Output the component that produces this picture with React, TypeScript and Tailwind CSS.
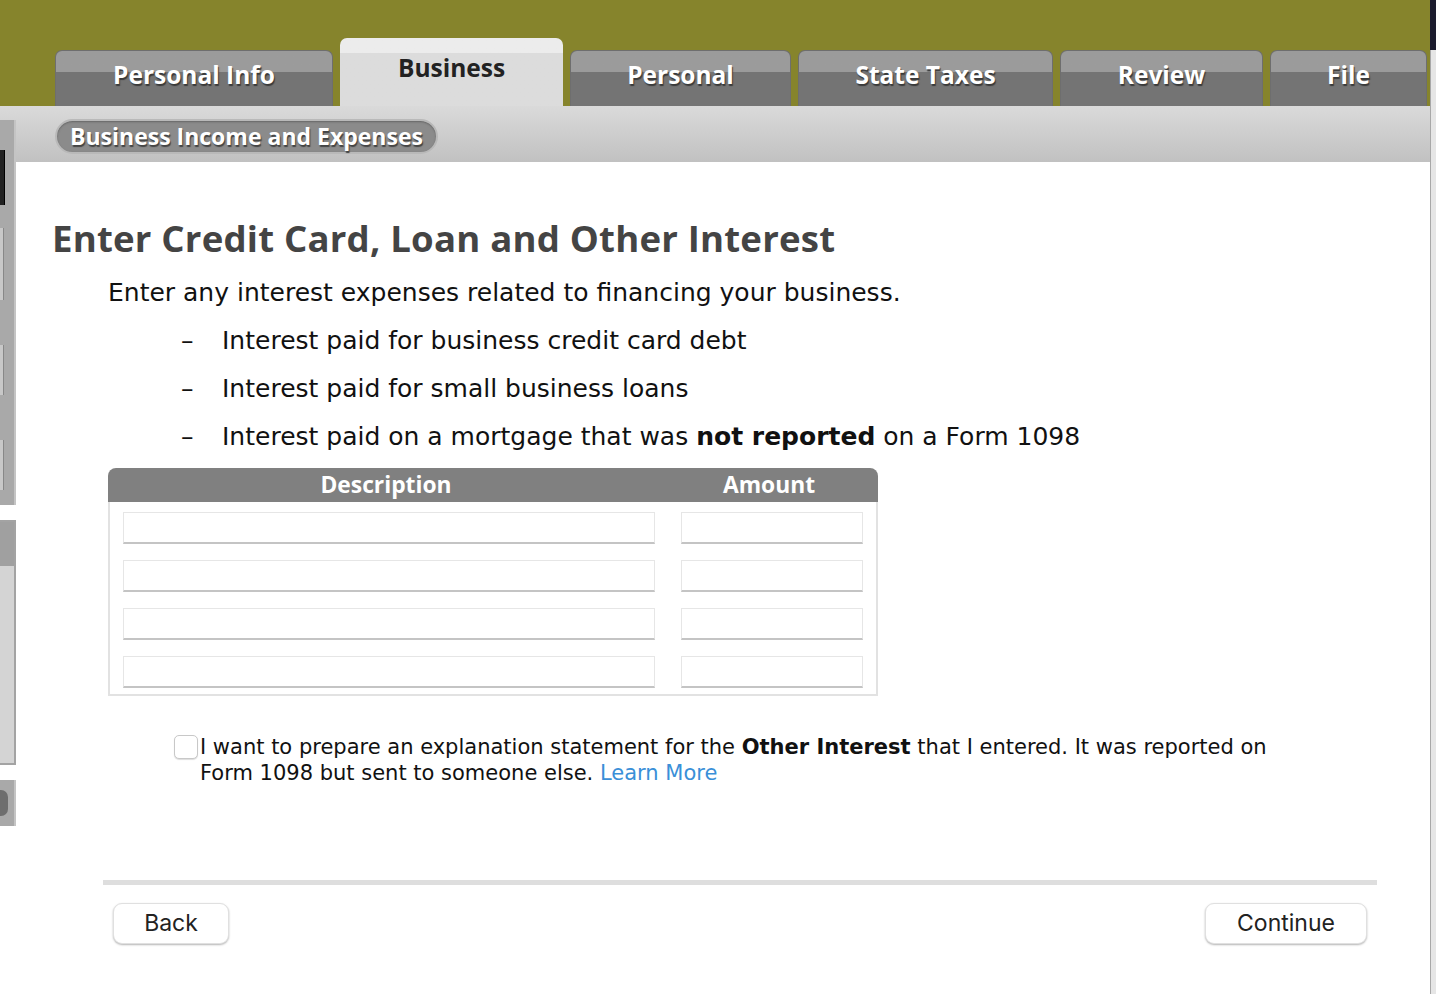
const tabs = [
  { label: "Personal Info", w: "w-[278px]" },
  { label: "Business", w: "w-[223px]", active: true },
  { label: "Personal", w: "w-[221px]" },
  { label: "State Taxes", w: "w-[255px]" },
  { label: "Review", w: "w-[203px]" },
  { label: "File", w: "w-[157px]" },
];

const bullets = [
  <>Interest paid for business credit card debt</>,
  <>Interest paid for small business loans</>,
  <>
    Interest paid on a mortgage that was <b className="font-bold">not reported</b> on a Form 1098
  </>,
];

function Tab({ label, w, active }: { label: string; w: string; active?: boolean }) {
  if (active) {
    return (
      <div className={`${w} h-[68px] rounded-t-[7px] bg-gradient-to-b from-[#ececec] from-[22%] to-[#dcdcdc] to-[22%] flex justify-center pt-[18px]`}>
        <span className="text-[24.5px] font-bold text-[#222] font-['Open_Sans'] leading-none">{label}</span>
      </div>
    );
  }
  return (
    <div className={`${w} h-[56px] rounded-t-[7px] bg-gradient-to-b from-[#9b9b9b] from-[38%] to-[#747474] to-[38%] flex justify-center pt-[12px] border-x border-t border-[#6e6e6e]`}>
      <span className="text-[24.5px] font-bold text-white font-['Open_Sans'] leading-none [text-shadow:1px_2px_1px_#3a3a3a]">
        {label}
      </span>
    </div>
  );
}

function Field({ w }: { w: string }) {
  return <div className={`${w} h-[32px] bg-white border border-[#e6e6e6] border-b-[#c4c4c4] border-b-2`} />;
}

export default function App() {
  return (
    <div className="relative w-[1436px] h-[994px] flex overflow-hidden bg-white font-['DejaVu_Sans',sans-serif]">
      <div className="w-[1430px] flex flex-col">
        <div className="h-[106px] bg-[#86842c] flex items-end gap-[7px] pl-[55px]">
          {tabs.map((t) => (
            <Tab key={t.label} {...t} />
          ))}
        </div>
        <div className="h-[56px] bg-gradient-to-b from-[#dadada] to-[#c1c1c1] flex items-center pl-[55px] pt-[4px]">
          <div className="h-[35px] px-[13px] rounded-full bg-[#8b8b8b] border-2 border-[#b9b9b9] shadow-[inset_0_1px_2px_#666] flex items-center">
            <span className="text-[23px] font-bold text-white font-['Open_Sans'] leading-none [text-shadow:1px_2px_1px_#444]">
              Business Income and Expenses
            </span>
          </div>
        </div>

        <div className="flex-1 bg-white pl-[52px] pt-[52px]">
          <h1 className="text-[36.6px] font-bold text-[#444] font-['Open_Sans'] leading-[48px] tracking-[0.2px]">
            Enter Credit Card, Loan and Other Interest
          </h1>
          <div className="pl-[56px]">
            <p className="text-[25px] text-[#111] leading-[32px] mt-[15px]">
              Enter any interest expenses related to financing your business.
            </p>
            <ul className="mt-[16px] flex flex-col gap-[16px] pl-[73px]">
              {bullets.map((b, i) => (
                <li key={i} className="flex text-[25px] text-[#111] leading-[32px]">
                  <span className="w-[41px]">–</span>
                  <span>{b}</span>
                </li>
              ))}
            </ul>

            <div className="mt-[15px] w-[770px]">
              <div className="h-[34px] bg-[#808080] rounded-t-[8px] flex items-center text-white font-['Open_Sans'] font-bold text-[22.8px]">
                <span className="w-[556px] text-center">Description</span>
                <span className="flex-1 text-center pr-[4px]">Amount</span>
              </div>
              <div className="border-2 border-t-0 border-[#e2e2e2] px-[13px] pt-[10px] pb-[6px] flex flex-col gap-[16px]">
                {[0, 1, 2, 3].map((i) => (
                  <div key={i} className="flex gap-[26px]">
                    <Field w="w-[532px]" />
                    <Field w="w-[182px]" />
                  </div>
                ))}
              </div>
            </div>

            <div className="mt-[38px] ml-[66px] flex items-start w-[1120px]">
              <div className="w-[24px] h-[24px] mt-[1px] mr-[2px] shrink-0 rounded-[5px] border border-[#c8c8c8] bg-white shadow-[0_1px_1px_#ddd]" />
              <p className="text-[21px] text-[#111] leading-[26px]">
                I want to prepare an explanation statement for the <b className="font-bold">Other Interest</b> that I entered. It was
                reported on Form 1098 but sent to someone else.{" "}
                <span className="text-[#3a8fd8]">Learn More</span>
              </p>
            </div>
          </div>

          <div className="mt-[94px] ml-[51px] w-[1274px] h-[5px] bg-[#dedede]" />
          <div className="mt-[18px] ml-[61px] w-[1254px] flex justify-between font-['Inter',sans-serif]">
            <button className="w-[116px] h-[41px] rounded-[9px] bg-white border border-[#e0e0e0] shadow-[0_1px_2px_#b5b5b5] text-[23px] text-[#222]">
              Back
            </button>
            <button className="w-[162px] h-[41px] rounded-[9px] bg-white border border-[#e0e0e0] shadow-[0_1px_2px_#b5b5b5] text-[23px] text-[#222]">
              Continue
            </button>
          </div>
        </div>
      </div>

      <div className="w-[6px] flex flex-col">
        <div className="h-[50px] bg-[#1c1c2e]" />
        <div className="flex-1 bg-[#e6e6e6] border-l border-[#a8a8a8]" />
      </div>

      {/* partial window on the left edge */}
      <div className="absolute left-0 top-[120px] w-[16px] flex flex-col">
        <div className="h-[385px] bg-[#a9a9a9] border-r-2 border-[#c4c4c4] flex flex-col pt-[30px] gap-[23px]">
          <div className="h-[55px] w-[5px] bg-[#222] border-r border-black" />
          <div className="h-[72px] w-[4px] bg-[#c8c8c8] border-r border-[#888]" />
          <div className="h-[50px] w-[4px] bg-[#c8c8c8] border-r border-[#888] mt-[22px]" />
          <div className="h-[50px] w-[4px] bg-[#c8c8c8] border-r border-[#888] mt-[22px]" />
        </div>
        <div className="h-[15px] bg-white" />
        <div className="h-[245px] bg-[#d4d4d4] border-r-2 border-y-2 border-[#a3a3a3] flex flex-col">
          <div className="h-[44px] bg-[#a0a0a0]" />
        </div>
        <div className="h-[15px] bg-white" />
        <div className="h-[46px] bg-[#a9a9a9] border-r-2 border-[#c4c4c4] flex items-center">
          <div className="w-[14px] h-[26px] -ml-[6px] rounded-full bg-[#6e6e6e]" />
        </div>
      </div>
    </div>
  );
}
